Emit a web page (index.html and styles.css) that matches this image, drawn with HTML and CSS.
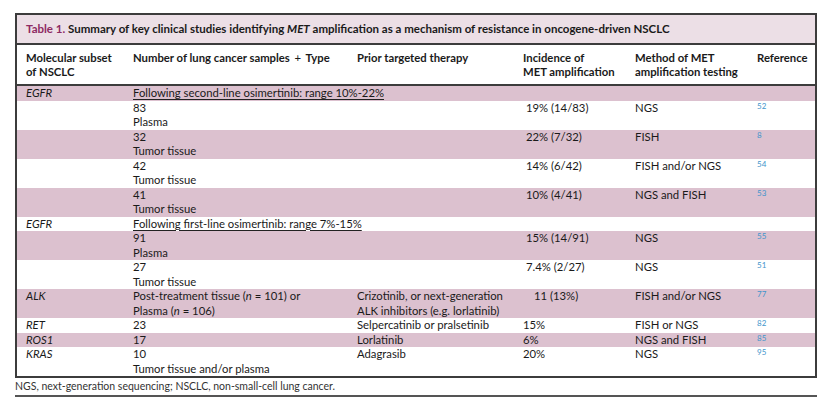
FILE: index.html
```html
<!DOCTYPE html>
<html lang="en">
<head>
<meta charset="utf-8">
<title>Table 1</title>
<link rel="stylesheet" href="styles.css">
</head>
<body>
<div class="page">
  <div class="frame">
    <div class="caption"><span class="cap-label">Table 1.</span> Summary of key clinical studies identifying <i>MET</i> amplification as a mechanism of resistance in oncogene-driven NSCLC</div>
    <table class="grid">
      <colgroup>
        <col class="c1"><col class="c2"><col class="c3"><col class="c4"><col class="c5"><col class="c6">
      </colgroup>
      <thead>
        <tr>
          <th>Molecular subset<br>of NSCLC</th>
          <th>Number of lung cancer samples <span class="plus">+</span> Type</th>
          <th>Prior targeted therapy</th>
          <th>Incidence of<br>MET amplification</th>
          <th>Method of MET<br>amplification testing</th>
          <th>Reference</th>
        </tr>
      </thead>
      <tbody>
        <tr class="shade">
          <td><i>EGFR</i></td>
          <td colspan="2"><span class="ul">Following second-line osimertinib: range 10%-22%</span></td>
          <td></td><td></td><td></td>
        </tr>
        <tr>
          <td></td>
          <td>83<br>Plasma</td>
          <td></td>
          <td><span class="ind-s">19% (14/83)</span></td>
          <td>NGS</td>
          <td><span class="ref">52</span></td>
        </tr>
        <tr class="shade">
          <td></td>
          <td>32<br>Tumor tissue</td>
          <td></td>
          <td><span class="ind-s">22% (7/32)</span></td>
          <td>FISH</td>
          <td><span class="ref">8</span></td>
        </tr>
        <tr>
          <td></td>
          <td>42<br>Tumor tissue</td>
          <td></td>
          <td><span class="ind-s">14% (6/42)</span></td>
          <td>FISH and/or NGS</td>
          <td><span class="ref">54</span></td>
        </tr>
        <tr class="shade">
          <td></td>
          <td>41<br>Tumor tissue</td>
          <td></td>
          <td><span class="ind-s">10% (4/41)</span></td>
          <td>NGS and FISH</td>
          <td><span class="ref">53</span></td>
        </tr>
        <tr>
          <td><i>EGFR</i></td>
          <td colspan="2"><span class="ul">Following first-line osimertinib: range 7%-15%</span></td>
          <td></td><td></td><td></td>
        </tr>
        <tr class="shade">
          <td></td>
          <td>91<br>Plasma</td>
          <td></td>
          <td><span class="ind-s">15% (14/91)</span></td>
          <td>NGS</td>
          <td><span class="ref">55</span></td>
        </tr>
        <tr>
          <td></td>
          <td>27<br>Tumor tissue</td>
          <td></td>
          <td><span class="ind-s">7.4% (2/27)</span></td>
          <td>NGS</td>
          <td><span class="ref">51</span></td>
        </tr>
        <tr class="shade">
          <td><i>ALK</i></td>
          <td>Post-treatment tissue (<i>n</i> = 101) or<br>Plasma (<i>n</i> = 106)</td>
          <td>Crizotinib, or next-generation<br>ALK inhibitors (e.g. lorlatinib)</td>
          <td><span class="ind-l">11 (13%)</span></td>
          <td>FISH and/or NGS</td>
          <td><span class="ref">77</span></td>
        </tr>
        <tr>
          <td><i>RET</i></td>
          <td>23</td>
          <td>Selpercatinib or pralsetinib</td>
          <td>15%</td>
          <td>FISH or NGS</td>
          <td><span class="ref">82</span></td>
        </tr>
        <tr class="shade">
          <td><i>ROS1</i></td>
          <td>17</td>
          <td>Lorlatinib</td>
          <td>6%</td>
          <td>NGS and FISH</td>
          <td><span class="ref">85</span></td>
        </tr>
        <tr>
          <td><i>KRAS</i></td>
          <td>10<br>Tumor tissue and/or plasma</td>
          <td>Adagrasib</td>
          <td>20%</td>
          <td>NGS</td>
          <td><span class="ref">95</span></td>
        </tr>
      </tbody>
    </table>
  </div>
  <p class="note">NGS, next-generation sequencing; NSCLC, non-small-cell lung cancer.</p>
  <div class="rule"></div>
</div>
</body>
</html>
```

FILE: styles.css
```css
html, body {
  margin: 0;
  padding: 0;
  background: #ffffff;
}

body {
  font-family: Lato, "Liberation Sans", sans-serif;
  font-size: 11.3px;
  color: #1a1a1a;
}

.page {
  width: 802px;
  padding: 13px 0 0 15px;
}

.frame {
  box-sizing: border-box;
  width: 802px;
  border: 2px solid #3c3c3c;
}

.caption {
  height: 28px;
  line-height: 28px;
  padding-left: 9px;
  background: #ecdfe6;
  border-bottom: 2px solid #3c3c3c;
  font-size: 11.5px;
  font-weight: bold;
  white-space: nowrap;
}

.cap-label {
  color: #8e2a63;
}

.grid {
  width: 100%;
  border-collapse: collapse;
  table-layout: fixed;
}

.c1 { width: 116px; }
.c2 { width: 224px; }
.c3 { width: 166px; }
.c4 { width: 112px; }
.c5 { width: 122px; }
.c6 { width: auto; }

.grid th {
  text-align: left;
  font-weight: bold;
  vertical-align: top;
  line-height: 14px;
  padding: 6px 0 5px 0;
  border-bottom: 2px solid #3c3c3c;
  background: #ffffff;
}

.plus {
  font-weight: normal;
  padding: 0 2px;
}

.grid td {
  vertical-align: top;
  line-height: 14.5px;
  padding: 0;
  white-space: nowrap;
}

.grid th:first-child,
.grid td:first-child {
  padding-left: 9px;
}

.shade td {
  background: #dcc1cf;
}

.ul {
  text-decoration: underline;
  text-decoration-thickness: 1px;
  text-underline-offset: 2px;
  text-decoration-color: #222222;
}

.ind-s {
  padding-left: 3px;
}

.ind-l {
  padding-left: 11px;
}

.ref {
  display: block;
  font-size: 8px;
  line-height: 9px;
  padding-top: 1px;
  color: #3f95cc;
}

.note {
  margin: 2px 0 0 0;
  font-size: 10.5px;
  line-height: 12px;
  color: #333333;
}

.rule {
  margin-top: 3px;
  height: 2px;
  background: #555555;
}
```
